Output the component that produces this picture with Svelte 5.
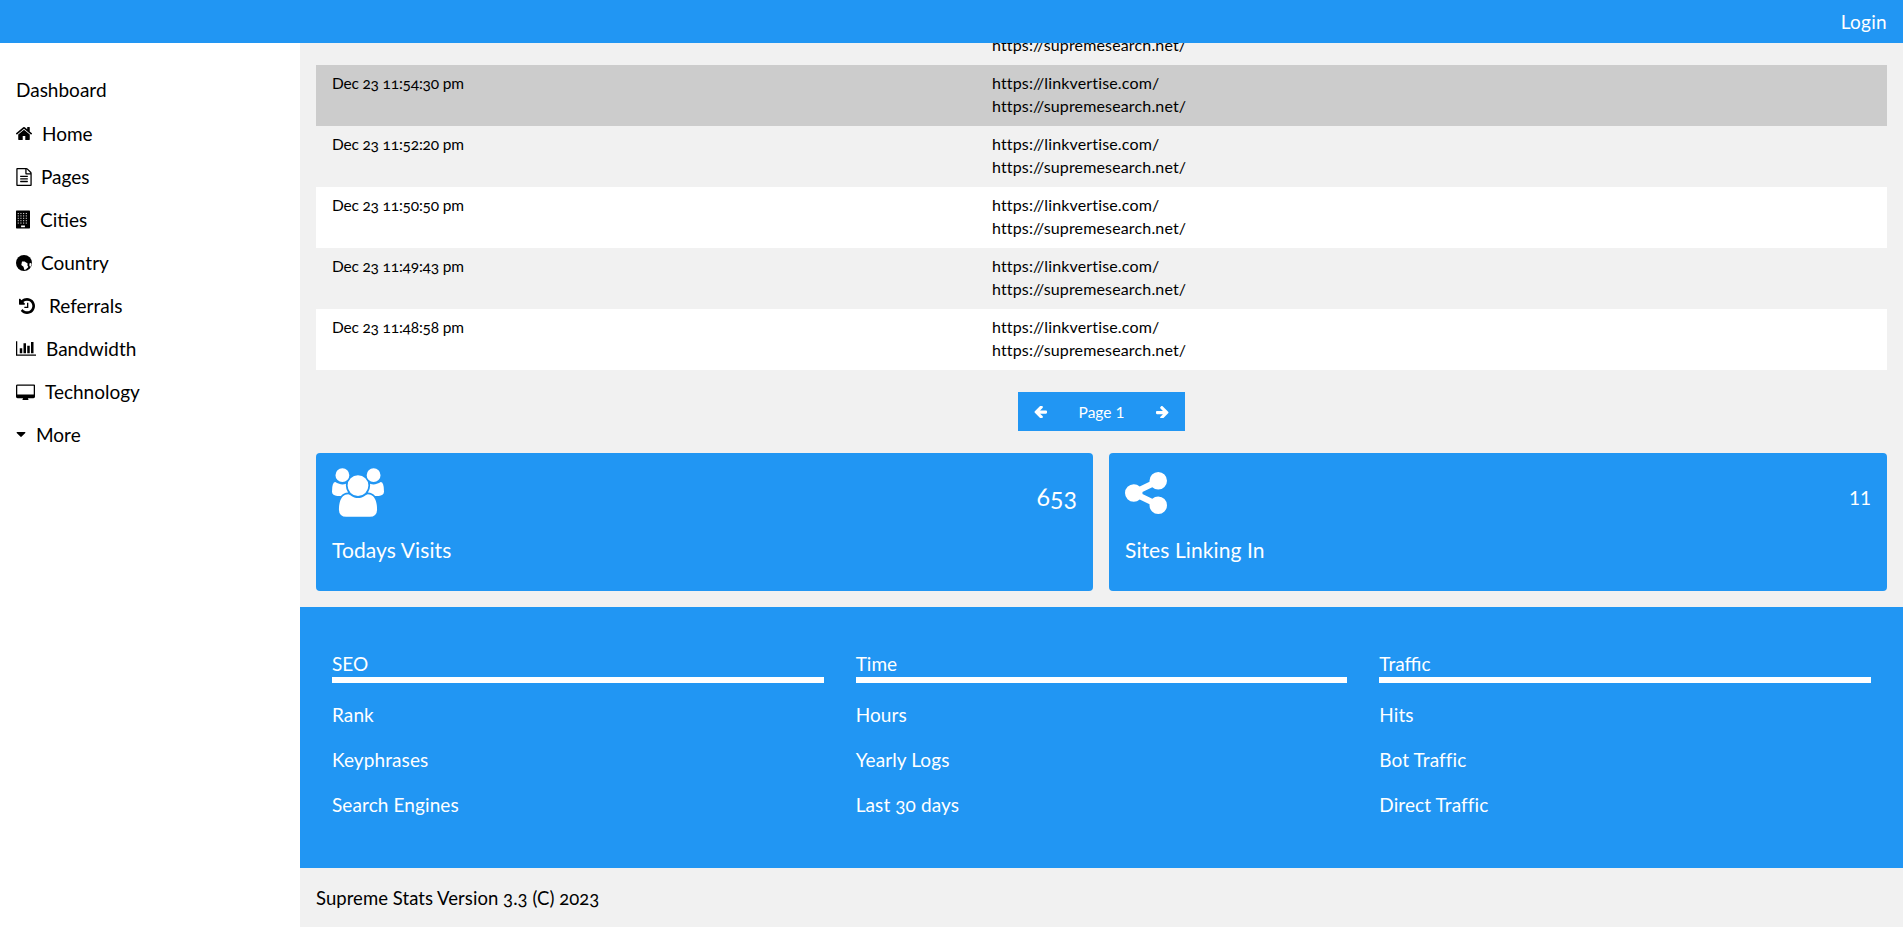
<script>
  const rows = [
    ['Dec 23 11:54:30 pm', 'hover'],
    ['Dec 23 11:52:20 pm', 'odd'],
    ['Dec 23 11:50:50 pm', 'even'],
    ['Dec 23 11:49:43 pm', 'odd'],
    ['Dec 23 11:48:58 pm', 'even']
  ];
  const footerCols = [
    { title: 'SEO', links: ['Rank', 'Keyphrases', 'Search Engines'] },
    { title: 'Time', links: ['Hours', 'Yearly Logs', 'Last 30 days'] },
    { title: 'Traffic', links: ['Hits', 'Bot Traffic', 'Direct Traffic'] }
  ];
  const windows = [];
  for (let r = 0; r < 5; r++) for (let c = 0; c < 4; c++) windows.push([300 + c * 270, 240 + r * 240]);
</script>

<div class="page">
  <header class="top"><a href="#login" class="login">Login</a></header>
  <div class="body">
    <nav class="side">
      <a href="#d" class="item first">Dashboard</a>
      <a href="#h" class="item"><svg class="i home" viewBox="97 256 1598 1280"><path d="M1472 992v480q0 26-19 45t-45 19h-384v-384h-256v384h-384q-26 0-45-19t-19-45v-480q0-1 .5-3t.5-3l575-474 575 474q1 2 1 6zm223-69l-62 74q-8 9-21 11h-3q-13 0-21-7l-692-577-692 577q-12 8-24 7-13-2-21-11l-62-74q-8-10-7-23.5t11-21.5l719-599q32-26 76-26t76 26l244 204v-195q0-14 9-23t23-9h192q14 0 23 9t9 23v408l219 182q10 8 11 21.5t-7 23.5z"/></svg>Home</a>
      <a href="#p" class="item"><svg class="i file" viewBox="128 0 1536 1792"><path d="M1596 380q28 28 48 76t20 88v1152q0 40-28 68t-68 28h-1344q-40 0-68-28t-28-68v-1600q0-40 28-68t68-28h896q40 0 88 20t76 48zm-444-244v376h376q-10-29-22-41l-313-313q-12-12-41-22zm384 1528v-1024h-416q-40 0-68-28t-28-68v-416h-768v1536h1280zm-1024-864q0-14 9-23t23-9h704q14 0 23 9t9 23v64q0 14-9 23t-23 9h-704q-14 0-23-9t-9-23v-64zm736 224q14 0 23 9t9 23v64q0 14-9 23t-23 9h-704q-14 0-23-9t-9-23v-64q0-14 9-23t23-9h704zm0 256q14 0 23 9t9 23v64q0 14-9 23t-23 9h-704q-14 0-23-9t-9-23v-64q0-14 9-23t23-9h704z"/></svg>Pages</a>
      <a href="#c" class="item"><svg class="i bld" viewBox="128 0 1408 1792"><path d="M192 0h1280q64 0 64 64v1664q0 64-64 64h-1280q-64 0-64-64v-1664q0-64 64-64z"/>{#each windows as w}<rect x={w[0]} y={w[1]} width="110" height="110" fill="#d8d8d8"/>{/each}<rect x="640" y="1500" width="384" height="170" fill="#fff"/></svg>Cities</a>
      <a href="#y" class="item"><svg class="i globe" viewBox="0 0 16 16"><circle cx="8" cy="8" r="8"/><path fill="#fff" d="M6 6.4l2.6.2 3 2-.2 2 1 1.3-2.6 2.6-1.4.4-.9-3.2-2.2-1.8zM13.4 8.4l1.8-.6.3 2-1.2 2.2-.9-1.2z"/></svg>Country</a>
      <a href="#r" class="item"><svg class="i hist" viewBox="128 128 1536 1536"><path d="M1664 896q0 156-61 298t-164 245-245 164-298 61q-172 0-327-72.5t-264-204.5q-7-10-6.5-22.5t8.5-20.5l137-138q10-9 25-9 16 2 23 12 73 95 179 147t225 52q104 0 198.5-40.5t163.5-109.5 109.5-163.5 40.5-198.5-40.5-198.5-109.5-163.5-163.5-109.5-198.5-40.5q-98 0-188 35.5t-160 101.5l137 138q31 30 14 69-17 40-59 40h-448q-26 0-45-19t-19-45v-448q0-42 40-59 39-17 69 14l130 129q107-101 244.5-156.5t284.5-55.5q156 0 298 61t245 164 164 245 61 298zm-640-288v448q0 14-9 23t-23 9h-320q-14 0-23-9t-9-23v-64q0-14 9-23t23-9h224v-352q0-14 9-23t23-9h64q14 0 23 9t9 23z"/></svg>Referrals</a>
      <a href="#b" class="item"><svg class="i chart" viewBox="0 192 2048 1472"><path d="M640 896v512h-256v-512h256zm384-512v1024h-256v-1024h256zm1024 1152v128h-2048v-1472h128v1344h1920zm-640-896v768h-256v-768h256zm384-384v1152h-256v-1152h256z"/></svg>Bandwidth</a>
      <a href="#t" class="item"><svg class="i desk" viewBox="0 0 1920 1536"><path fill-rule="evenodd" d="M1792 992v-832q0-13-9.5-22.5t-22.5-9.5h-1600q-13 0-22.5 9.5t-9.5 22.5v832q0 13 9.5 22.5t22.5 9.5h1600q13 0 22.5-9.5t9.5-22.5zm128-832v1088q0 66-47 113t-113 47h-544q0 37 16 77.5t32 71 16 43.5q0 26-19 45t-45 19h-512q-26 0-45-19t-19-45q0-14 16-44t32-70 16-78h-544q-66 0-113-47t-47-113v-1088q0-66 47-113t113-47h1632q66 0 113 47t47 113z"/></svg>Technology</a>
      <a href="#m" class="item"><svg class="i caret" viewBox="384 640 1024 576"><path d="M1408 704q0 26-19 45l-448 448q-19 19-45 19t-45-19l-448-448q-19-19-19-45t19-45 45-19h896q26 0 45 19t19 45z"/></svg>More</a>
    </nav>
    <main class="main">
      <div class="scroll">
        <table>
          <tbody>
            <tr class="odd">
              <td class="d"></td>
              <td class="u">&nbsp;<br />https://supremesearch.net/</td>
            </tr>
            {#each rows as r}
              <tr class={r[1]}>
                <td class="d">{r[0]}</td>
                <td class="u">https://linkvertise.com/<br />https://supremesearch.net/</td>
              </tr>
            {/each}
          </tbody>
        </table>
        <div class="pager">
          <span class="pbtn"><svg viewBox="128 256 1536 1408"><path d="M1664 896v128q0 53-32.5 90.5t-84.5 37.5h-704l293 294q38 36 38 90t-38 90l-75 76q-38 38-91 38-52 0-90-38l-651-652q-37-37-37-90 0-52 37-91l651-650q39-39 90-39 52 0 90 39l75 74q38 38 38 91t-38 91l-293 293h704q52 0 84.5 37.5t32.5 90.5z" /></svg></span>
          <span class="pnum">Page 1</span>
          <span class="pbtn"><svg viewBox="128 192 1536 1408"><path d="M1600 960q0 54-37 91l-651 651q-39 37-91 37-51 0-90-37l-75-75q-38-38-38-91t38-91l293-293h-704q-52 0-84.5-37.5t-32.5-90.5v-128q0-53 32.5-90.5t84.5-37.5h704l-293-294q-38-36-38-90t38-90l75-75q38-38 90-38 53 0 91 38l651 651q37 35 37 90z"/></svg></span>
        </div>
        <div class="cards">
          <section class="card">
            <div class="chead">
              <svg class="users" viewBox="-64 0 1920 1792"><path d="M529 896q-162 5-265 128h-134q-82 0-138-40.5t-56-118.5q0-353 124-353 6 0 43.5 21t97.5 42.5 119 21.5q67 0 133-23-5 37-5 66 0 139 81 256zm1071 637q0 120-73 189.5t-194 69.5h-874q-121 0-194-69.5t-73-189.5q0-53 3.5-103.5t14-109 26.5-108.5 43-97.5 62-81 85.5-53.5 111.5-20q10 0 43 21.5t73 48 107 48 135 21.5 135-21.5 107-48 73-48 43-21.5q61 0 111.5 20t85.5 53.5 62 81 43 97.5 26.5 108.5 14 109 3.5 103.5zm-1024-1277q0 106-75 181t-181 75-181-75-75-181 75-181 181-75 181 75 75 181zm704 384q0 159-112.5 271.5t-271.5 112.5-271.5-112.5-112.5-271.5 112.5-271.5 271.5-112.5 271.5 112.5 112.5 271.5zm576 225q0 78-56 118.5t-138 40.5h-134q-103-123-265-128 81-117 81-256 0-29-5-66 66 23 133 23 59 0 119-21.5t97.5-42.5 43.5-21q124 0 124 353zm-128-609q0 106-75 181t-181 75-181-75-75-181 75-181 181-75 181 75 75 181z"/></svg>
              <span class="num big">653</span>
            </div>
            <div class="clabel">Todays Visits</div>
          </section>
          <section class="card">
            <div class="chead">
              <svg class="share" viewBox="128 128 1536 1536"><path d="M1344 1024q133 0 226.5 93.5t93.5 226.5-93.5 226.5-226.5 93.5-226.5-93.5-93.5-226.5q0-12 2-34l-360-180q-92 86-218 86-133 0-226.5-93.5t-93.5-226.5 93.5-226.5 226.5-93.5q126 0 218 86l360-180q-2-22-2-34 0-133 93.5-226.5t226.5-93.5 226.5 93.5 93.5 226.5-93.5 226.5-226.5 93.5q-126 0-218-86l-360 180q2 22 2 34t-2 34l360 180q92-86 218-86z"/></svg>
              <span class="num">11</span>
            </div>
            <div class="clabel">Sites Linking In</div>
          </section>
        </div>
        <div class="links">
          {#each footerCols as col}
            <div class="col">
              <div class="ctitle">{col.title}</div>
              <hr />
              {#each col.links as l}<a href="#l" class="flink">{l}</a>{/each}
            </div>
          {/each}
        </div>
        <footer class="foot">Supreme Stats Version 3.3 (C) 2023</footer>
      </div>
    </main>
  </div>
</div>

<style>
  :global(body) {
    margin: 0;
    font-family: Lato, "Open Sans", sans-serif;
    font-variant-numeric: oldstyle-nums;
    color: #000;
  }
  a { color: inherit; text-decoration: none; }
  .page { height: 927px; display: flex; flex-direction: column; overflow: hidden; background: #f1f1f1; }
  .top { height: 43px; flex: none; background: #2196f3; color: #fff; display: flex; justify-content: flex-end; align-items: center; padding: 0 16px; position: relative; z-index: 2; }
  .login { font-size: 19px; letter-spacing: .3px; }
  .body { flex: 1; min-height: 0; display: grid; grid-template-columns: 300px 1fr; }
  .side { background: #fff; padding-top: 24px; display: flex; flex-direction: column; }
  .item { display: flex; align-items: center; height: 43px; padding-left: 16px; font-size: 19px; }
  .first { height: 45px; flex: none; }
  .i { flex: none; fill: #000; }
  .home { width: 16px; height: 13px; margin-right: 10px; }
  .file { width: 16px; height: 18px; margin-right: 9px; }
  .bld { width: 14px; height: 19px; margin-right: 10px; }
  .globe { width: 16px; height: 16px; margin-right: 9px; }
  .hist { width: 16px; height: 16px; margin-left: 3px; margin-right: 14px; }
  .chart { width: 20px; height: 15px; margin-right: 10px; }
  .desk { width: 19px; height: 16px; margin-right: 10px; }
  .caret { width: 10px; height: 5px; margin-right: 10px; }
  .main { overflow: hidden; min-width: 0; }
  .scroll { margin-top: -39px; }
  table { border-collapse: collapse; width: calc(100% - 32px); margin: 0 16px; table-layout: fixed; line-height: 22.5px; }
  td { padding: 7px 16px 9px; vertical-align: top; height: 45px; }
  .d { width: 628px; font-size: 15.5px; letter-spacing: -.2px; }
  .u { font-size: 16px; letter-spacing: .15px; }
  tr.odd { background: #f1f1f1; }
  tr.even { background: #fff; }
  tr.hover { background: #ccc; }
  .pager { width: 167px; height: 39px; margin: 22px auto; background: #2196f3; color: #fff; display: flex; align-items: center; justify-content: space-between; padding: 0 16px; box-sizing: border-box; font-size: 15.5px; font-variant-numeric: lining-nums; }
  .pbtn { display: flex; }
  .pbtn svg { width: 13px; height: 12px; fill: #fff; }
  .cards { display: grid; grid-template-columns: 777px 1fr; gap: 16px; padding: 0 16px; height: 138px; }
  .card { background: #2196f3; color: #fff; border-radius: 4px; padding: 15px 16px; box-sizing: border-box; }
  .chead { display: flex; justify-content: space-between; align-items: center; height: 49px; }
  .users { width: 52px; height: 49px; fill: #fff; }
  .share { width: 42px; height: 42px; fill: #fff; }
  .num { font-size: 19px; font-variant-numeric: lining-nums; padding-top: 9px; }
  .num.big { font-size: 25px; font-variant-numeric: oldstyle-nums; padding-top: 6px; }
  .clabel { font-size: 21px; margin-top: 20px; letter-spacing: .1px; }
  .links { margin-top: 16px; height: 261px; box-sizing: border-box; background: #2196f3; color: #fff; display: grid; grid-template-columns: repeat(3, 1fr); padding: 43px 16px 0; }
  .col { padding: 0 16px; display: flex; flex-direction: column; }
  .ctitle { font-size: 19px; line-height: 27px; }
  hr { width: 100%; height: 6px; background: #fff; border: 0; margin: 0 0 9px; flex: none; }
  .flink { font-size: 19px; line-height: 45px; letter-spacing: .1px; }
  .foot { height: 59px; display: flex; align-items: center; padding-left: 16px; font-size: 18.5px; letter-spacing: .05px; }
</style>
